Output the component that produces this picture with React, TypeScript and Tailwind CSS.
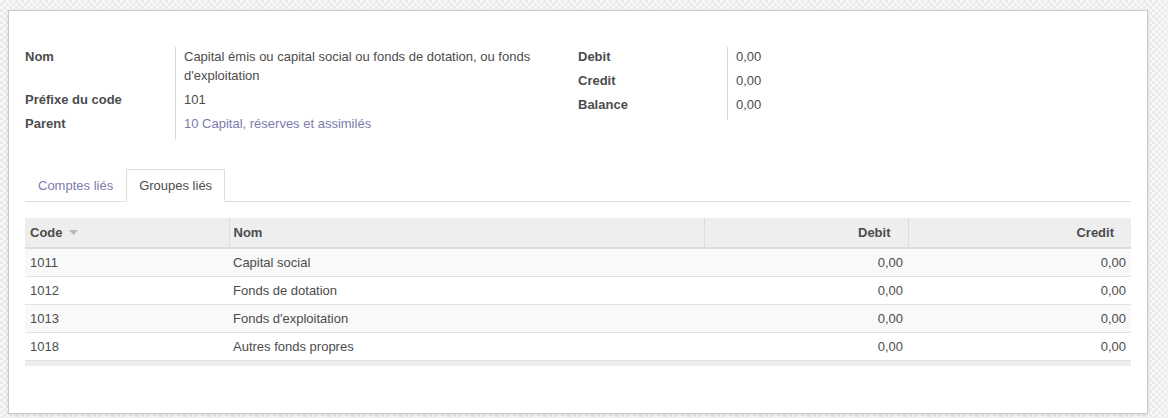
import React from "react";

const rows = [
  { code: "1011", nom: "Capital social", debit: "0,00", credit: "0,00" },
  { code: "1012", nom: "Fonds de dotation", debit: "0,00", credit: "0,00" },
  { code: "1013", nom: "Fonds d'exploitation", debit: "0,00", credit: "0,00" },
  { code: "1018", nom: "Autres fonds propres", debit: "0,00", credit: "0,00" },
];

export default function App() {
  return (
    <div
      className="w-[1168px] h-[418px] overflow-hidden bg-[#f1f1f1] bg-[image:repeating-conic-gradient(#ebebeb_0_25%,#f7f7f7_0_50%)] bg-[length:6px_6px] pt-[10px] pl-[8px] text-[13px] leading-[19px] text-[#4c4c4c]"
      style={{ fontFamily: '"Liberation Sans", Arial, sans-serif' }}
    >
      <div className="w-[1140px] h-[404px] bg-white border border-[#c9c8d4] shadow-[0_1px_3px_rgba(0,0,0,0.12)] px-4 pt-[36px]">
        {/* Form groups */}
        <div className="flex">
          <div className="w-[553px] grid grid-cols-[151px_1fr] self-start">
            <div className="font-bold border-r border-[#d9d9d9] pb-[5px]">Nom</div>
            <div className="pl-2 pr-[30px] pb-[5px]">
              Capital émis ou capital social ou fonds de dotation, ou fonds d'exploitation
            </div>
            <div className="font-bold border-r border-[#d9d9d9] pb-[5px]">Préfixe du code</div>
            <div className="pl-2 pb-[5px]">101</div>
            <div className="font-bold border-r border-[#d9d9d9] pb-[7px]">Parent</div>
            <div className="pl-2 pb-[7px] text-[#7c7bad]">10 Capital, réserves et assimilés</div>
          </div>
          <div className="w-[553px] grid grid-cols-[150px_1fr] self-start">
            <div className="font-bold border-r border-[#d9d9d9] pb-[5px]">Debit</div>
            <div className="pl-2 pb-[5px]">0,00</div>
            <div className="font-bold border-r border-[#d9d9d9] pb-[5px]">Credit</div>
            <div className="pl-2 pb-[5px]">0,00</div>
            <div className="font-bold border-r border-[#d9d9d9] pb-[6px]">Balance</div>
            <div className="pl-2 pb-[6px]">0,00</div>
          </div>
        </div>

        {/* Tabs */}
        <div className="mt-[29px] flex border-b border-[#dddddd] h-[33px]">
          <div className="px-[13px] flex items-center text-[#7c7bad]">Comptes liés</div>
          <div className="px-[12px] flex items-center bg-white border border-[#dddddd] border-b-white -mb-px h-[33px]">
            Groupes liés
          </div>
        </div>

        {/* Table */}
        <table className="mt-[16px] w-[1106px] border-collapse table-fixed">
          <colgroup>
            <col className="w-[204px]" />
            <col className="w-[475px]" />
            <col className="w-[204px]" />
            <col className="w-[223px]" />
          </colgroup>
          <thead>
            <tr className="bg-[#eeeeee] h-[30px] border-b-2 border-[#dcdcdc]">
              <th className="text-left font-bold pl-[5px]">
                <span className="inline-flex items-center gap-[6px]">
                  Code
                  <svg width="9" height="5" viewBox="0 0 9 5">
                    <path d="M0 0 L9 0 L4.5 5 Z" fill="#b8b8b8" />
                  </svg>
                </span>
              </th>
              <th className="text-left font-bold pl-[4px] border-l border-[#dcdcdc]">Nom</th>
              <th className="text-right font-bold pr-[17px] border-l border-[#dcdcdc]">Debit</th>
              <th className="text-right font-bold pr-[17px] border-l border-[#dcdcdc]">Credit</th>
            </tr>
          </thead>
          <tbody>
            {rows.map((r, i) => (
              <tr
                key={r.code}
                className={`h-[28px] border-b border-[#e2e2e2] ${i % 2 === 0 ? "bg-[#f9f9f9]" : "bg-white"}`}
              >
                <td className="pl-[5px]">{r.code}</td>
                <td className="pl-[4px]">{r.nom}</td>
                <td className="text-right pr-[5px]">{r.debit}</td>
                <td className="text-right pr-[5px]">{r.credit}</td>
              </tr>
            ))}
            <tr className="h-[6px] bg-[#eeeeee]">
              <td colSpan={4} className="p-0"></td>
            </tr>
          </tbody>
        </table>
      </div>
    </div>
  );
}
